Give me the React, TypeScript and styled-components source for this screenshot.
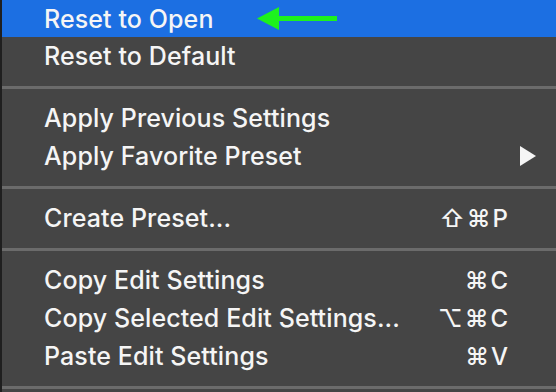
import styled, { createGlobalStyle } from 'styled-components';

const GlobalStyle = createGlobalStyle`
  html, body {
    margin: 0;
    padding: 0;
    background: #454545;
  }
  body {
    width: 556px;
    height: 392px;
    overflow: hidden;
  }
`;

const Menu = styled.div`
  width: 556px;
  height: 392px;
  box-sizing: border-box;
  background: #454545;
  border-left: 2px solid #1f1f1f;
  display: flex;
  flex-direction: column;
  overflow: hidden;
  font-family: Inter, "Liberation Sans", "DejaVu Sans", sans-serif;
  color: #f5f5f5;
`;

const Item = styled.div<{ $active?: boolean; $h?: number }>`
  flex: none;
  height: ${({ $h }) => $h ?? 38}px;
  display: flex;
  align-items: center;
  padding: 0 19px 0 42px;
  background: ${({ $active }) => ($active ? '#1c6fe2' : 'transparent')};
  font-size: 25px;
  font-weight: 500;
  letter-spacing: 0.1px;
  white-space: nowrap;
`;

const Label = styled.span`
  flex: 1;
  display: flex;
  align-items: center;
`;

const Shortcut = styled.span`
  margin-right: 27px;
  font-size: 24px;
  font-weight: 500;
  font-family: Inter, "DejaVu Sans", sans-serif;
  letter-spacing: 2px;
`;

const Separator = styled.div`
  flex: none;
  height: 3px;
  margin: 11px 0 10px;
  background: #6b6b6b;
`;

const Pointer = styled.svg`
  margin-left: 43px;
`;

const GreenArrow = () => (
  <Pointer width="82" height="26" viewBox="0 0 82 26">
    <path d="M0 12.5 L22 1 L22 10 L80 10 L80 15 L22 15 L22 24 Z" fill="#1df21d" />
  </Pointer>
);

const SubmenuArrow = () => (
  <svg width="18" height="20" viewBox="0 0 18 20">
    <path d="M1 0 L17 10 L1 20 Z" fill="#f5f5f5" />
  </svg>
);

export default function App() {
  return (
    <>
      <GlobalStyle />
      <Menu>
        <Item $active $h={37}>
          <Label>
            Reset to Open
            <GreenArrow />
          </Label>
        </Item>
        <Item>
          <Label>Reset to Default</Label>
        </Item>
        <Separator />
        <Item>
          <Label>Apply Previous Settings</Label>
        </Item>
        <Item>
          <Label>Apply Favorite Preset</Label>
          <SubmenuArrow />
        </Item>
        <Separator />
        <Item>
          <Label>Create Preset...</Label>
          <Shortcut>⇧⌘P</Shortcut>
        </Item>
        <Separator />
        <Item>
          <Label>Copy Edit Settings</Label>
          <Shortcut>⌘C</Shortcut>
        </Item>
        <Item>
          <Label>Copy Selected Edit Settings...</Label>
          <Shortcut>⌥⌘C</Shortcut>
        </Item>
        <Item>
          <Label>Paste Edit Settings</Label>
          <Shortcut>⌘V</Shortcut>
        </Item>
        <Separator />
      </Menu>
    </>
  );
}
